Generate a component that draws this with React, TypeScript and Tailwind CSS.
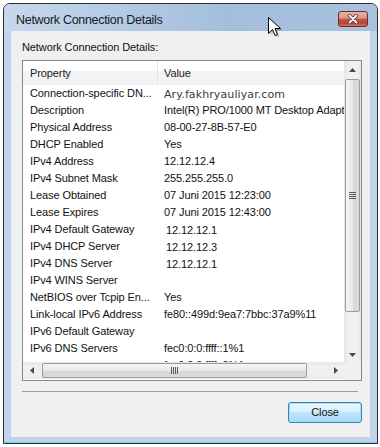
import React from "react";

type Row = { k: string; v: string; kind?: "special" | "shift" };

const rows: Row[] = [
  { k: "Connection-specific DN...", v: "Ary.fakhryauliyar.com", kind: "special" },
  { k: "Description", v: "Intel(R) PRO/1000 MT Desktop Adapter" },
  { k: "Physical Address", v: "08-00-27-8B-57-E0" },
  { k: "DHCP Enabled", v: "Yes" },
  { k: "IPv4 Address", v: "12.12.12.4" },
  { k: "IPv4 Subnet Mask", v: "255.255.255.0" },
  { k: "Lease Obtained", v: "07 Juni 2015 12:23:00" },
  { k: "Lease Expires", v: "07 Juni 2015 12:43:00" },
  { k: "IPv4 Default Gateway", v: "12.12.12.1", kind: "shift" },
  { k: "IPv4 DHCP Server", v: "12.12.12.3", kind: "shift" },
  { k: "IPv4 DNS Server", v: "12.12.12.1", kind: "shift" },
  { k: "IPv4 WINS Server", v: "" },
  { k: "NetBIOS over Tcpip En...", v: "Yes" },
  { k: "Link-local IPv6 Address", v: "fe80::499d:9ea7:7bbc:37a9%11" },
  { k: "IPv6 Default Gateway", v: "" },
  { k: "IPv6 DNS Servers", v: "fec0:0:0:ffff::1%1" },
  { k: "", v: "fec0:0:0:ffff::2%1" },
];

function Tri({ dir }: { dir: "up" | "down" | "left" | "right" }) {
  const pts =
    dir === "up"
      ? "0,4 3.5,0 7,4"
      : dir === "down"
      ? "0,0 3.5,4 7,0"
      : dir === "left"
      ? "4,0 0,3.5 4,7"
      : "0,0 4,3.5 0,7";
  const w = dir === "up" || dir === "down" ? 7 : 4;
  const h = dir === "up" || dir === "down" ? 4 : 7;
  return (
    <svg width={w} height={h} viewBox={`0 0 ${w} ${h}`}>
      <polygon points={pts} fill="#4a4a4a" />
    </svg>
  );
}

export default function App() {
  return (
    <div className="relative w-[380px] h-[447px] overflow-hidden bg-white [font-family:'Liberation_Sans',Arial,sans-serif]">
      <div className="ml-[3px] mt-[3px] w-[375px] h-[441px] border border-[#2e2e2e] rounded-t-[7px] bg-[#bfd4ea] flex flex-col overflow-hidden">
        {/* title bar */}
        <div className="h-[27px] flex items-start bg-[linear-gradient(to_right,#c6d8ec,#a4bedb_60%,#a8c2de)]">
          <div className="pl-[12px] pt-[8px] text-[12.5px] leading-[16px] tracking-[-0.3px] text-[#1a1a1a]">
            Network Connection Details
          </div>
          <div className="ml-auto mr-[9px] mt-[7px] w-[30px] h-[16px] rounded-[3px] border border-[#6b2d2b] bg-[linear-gradient(#eab3a7,#dc9585_45%,#c9533f_50%,#c0432f_80%,#d6725f)] flex items-center justify-center">
            <svg width="14" height="10" viewBox="0 0 14 10">
              <path d="M3.5 1.5 L10.5 8.5 M10.5 1.5 L3.5 8.5" stroke="#4a3a3a" strokeWidth="3.6" strokeLinecap="round" />
              <path d="M3.5 1.5 L10.5 8.5 M10.5 1.5 L3.5 8.5" stroke="#f4f4f4" strokeWidth="2" strokeLinecap="round" />
            </svg>
          </div>
        </div>
        {/* body */}
        <div className="flex h-[406px]">
          <div className="w-[7px]" />
          <div className="w-[359px] bg-[#f0f0f0] pl-[11px] pt-[9px] flex flex-col text-[11px] tracking-[-0.1px] text-[#111]">
            <div className="h-[15px] leading-[15px]">Network Connection Details:</div>
            {/* list view */}
            <div className="mt-[5px] w-[340px] h-[321px] border border-[#828790] bg-white flex">
              <div className="w-[321px] flex flex-col">
                <div className="h-[301px] overflow-hidden">
                  <div className="h-[24px] flex bg-[linear-gradient(#ffffff_0%,#ffffff_42%,#f3f4f6_42%,#f1f2f4_100%)] leading-[24px] text-[#222]">
                    <div className="w-[134px] pl-[7px]">Property</div>
                    <div className="w-[1px] bg-[#e3e5e8]" />
                    <div className="pl-[6px]">Value</div>
                  </div>
                  {rows.map((r, i) => (
                    <div key={i} className="h-[17px] flex leading-[17px] whitespace-nowrap">
                      <div className="w-[135px] shrink-0 pl-[7px] overflow-hidden">{r.k}</div>
                      {r.kind === "special" ? (
                        <div className="pl-[6px] pt-[1px] [font-family:'DejaVu_Sans',sans-serif] text-[11px] tracking-[0.1px] text-[#3b3b3b]">
                          {r.v}
                        </div>
                      ) : r.kind === "shift" ? (
                        <div className="pl-[8px] pt-[1px]">{r.v}</div>
                      ) : (
                        <div className="pl-[6px]">{r.v}</div>
                      )}
                    </div>
                  ))}
                </div>
                {/* horizontal scrollbar */}
                <div className="h-[17px] flex bg-[linear-gradient(#e6e6e6,#f0f0f0_25%,#f0f0f0_75%,#e8e8e8)]">
                  <div className="w-[17px] flex items-center justify-center">
                    <Tri dir="left" />
                  </div>
                  <div className="flex-1 flex items-center">
                    <div className="ml-[2px] w-[265px] h-[15px] rounded-[2px] border border-[#9b9b9b] bg-[linear-gradient(#f6f6f6,#e8e8e8_50%,#d6d6d6_51%,#dcdcdc)] flex items-center justify-center">
                      <svg width="8" height="7" viewBox="0 0 8 7">
                        <path d="M0.5 0 V7 M2.5 0 V7 M4.5 0 V7 M6.5 0 V7" stroke="#5a5a5a" strokeWidth="1" />
                      </svg>
                    </div>
                  </div>
                  <div className="w-[17px] flex items-center justify-center">
                    <Tri dir="right" />
                  </div>
                </div>
              </div>
              {/* vertical scrollbar */}
              <div className="w-[17px] flex flex-col">
                <div className="flex-1 flex flex-col bg-[linear-gradient(to_right,#e6e6e6,#f0f0f0_25%,#f0f0f0_75%,#e8e8e8)]">
                  <div className="h-[17px] flex items-center justify-center">
                    <Tri dir="up" />
                  </div>
                  <div className="flex-1 flex flex-col items-center">
                    <div className="mt-[1px] w-[15px] h-[233px] rounded-[2px] border border-[#9b9b9b] bg-[linear-gradient(to_right,#f6f6f6,#e8e8e8_50%,#d6d6d6_51%,#dcdcdc)] flex items-center justify-center">
                      <svg width="7" height="8" viewBox="0 0 7 8">
                        <path d="M0 0.5 H7 M0 2.5 H7 M0 4.5 H7 M0 6.5 H7" stroke="#5a5a5a" strokeWidth="1" />
                      </svg>
                    </div>
                  </div>
                  <div className="h-[17px] flex items-center justify-center">
                    <Tri dir="down" />
                  </div>
                </div>
                <div className="h-[17px] bg-[#f0f0f0]" />
              </div>
            </div>
            <div className="mt-[10px] w-[336px] h-[1px] bg-[#a0a0a0]" />
            <div className="mt-[10px] w-[340px] flex justify-end">
              <div className="w-[74px] h-[21px] rounded-[3px] border border-[#3c7fb1] shadow-[inset_0_0_0_1px_#9ee0f8] bg-[linear-gradient(#eaf6fd,#d9f0fc_45%,#bee6fd_50%,#a7d9f5)] flex items-center justify-center text-[11px] leading-[15px] text-[#111]">
                Close
              </div>
            </div>
          </div>
          <div className="w-[7px]" />
        </div>
        <div className="h-[6px] border-b border-[#7ccbe8]" />
      </div>
      {/* mouse cursor */}
      <svg className="absolute left-[268px] top-[17px]" width="16" height="23" viewBox="0 0 16 23">
        <path d="M2.5 2.5 L2.5 18.5 L6.5 14.5 L9 20.5 L11.5 19.5 L9 13.5 L14.5 13.5 Z" fill="#000" opacity="0.18" />
        <path d="M0.5 0.5 L0.5 16.5 L4.5 12.5 L7 18.5 L9.5 17.5 L7 11.5 L12.5 11.5 Z" fill="#fff" stroke="#000" strokeWidth="1" strokeLinejoin="miter" />
      </svg>
    </div>
  );
}
